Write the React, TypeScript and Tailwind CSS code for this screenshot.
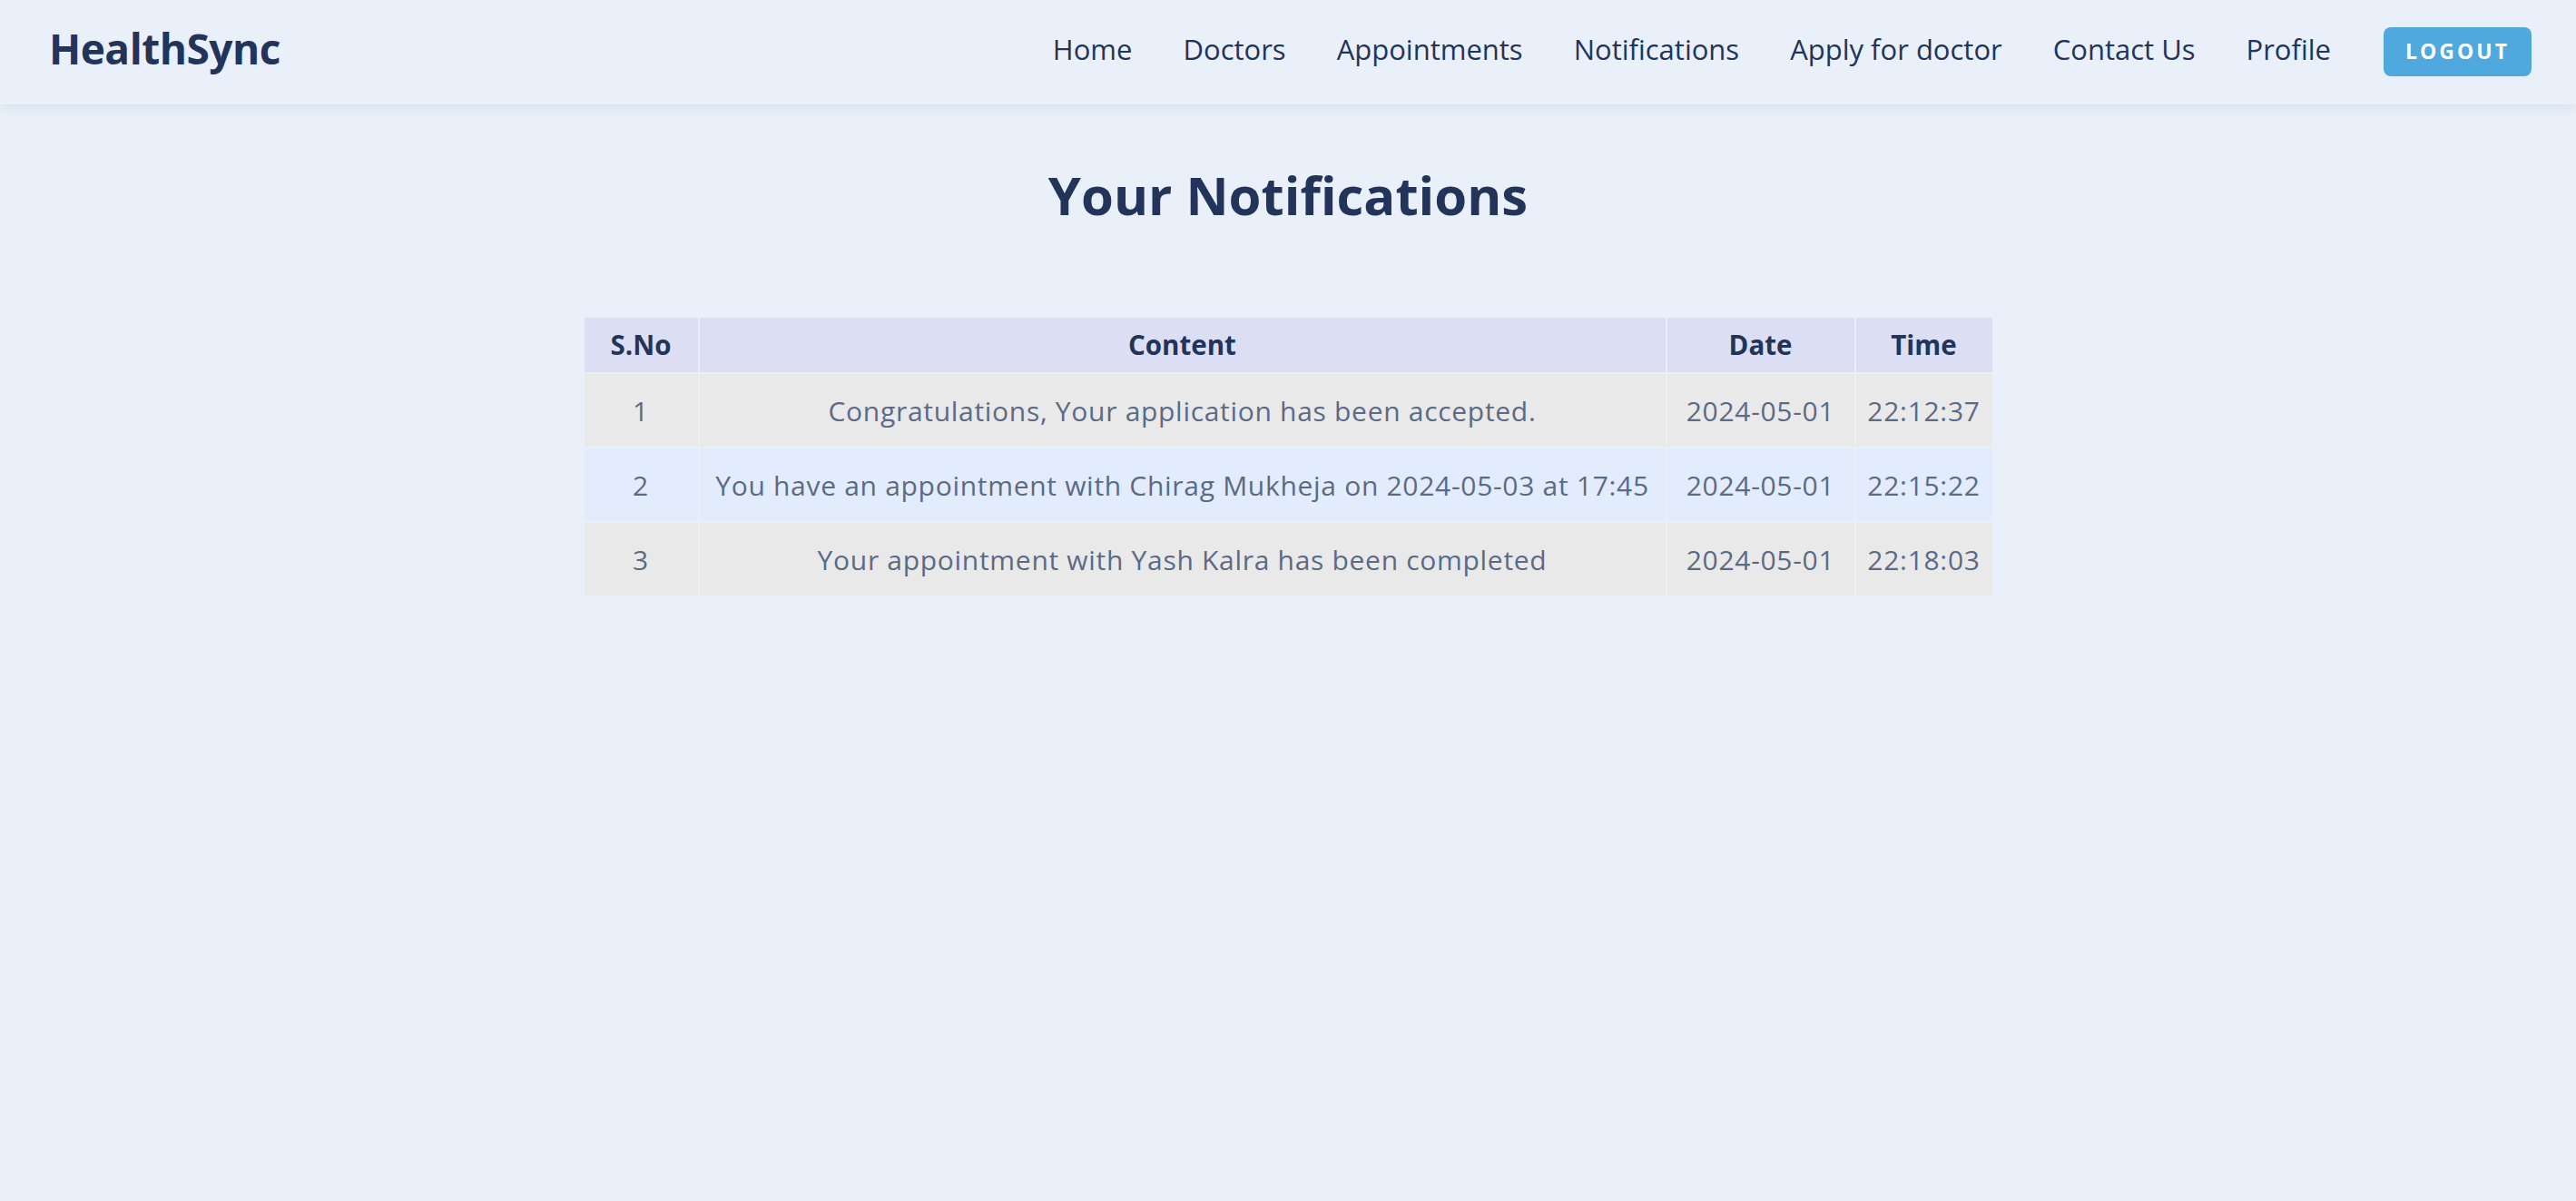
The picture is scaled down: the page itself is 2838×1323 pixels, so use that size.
import React from "react";

const rows = [
  { n: 1, c: "Congratulations, Your application has been accepted.", d: "2024-05-01", t: "22:12:37" },
  { n: 2, c: "You have an appointment with Chirag Mukheja on 2024-05-03 at 17:45", d: "2024-05-01", t: "22:15:22" },
  { n: 3, c: "Your appointment with Yash Kalra has been completed", d: "2024-05-01", t: "22:18:03" },
];

const links = ["Home", "Doctors", "Appointments", "Notifications", "Apply for doctor", "Contact Us", "Profile"];

export default function App() {
  return (
    <div
      className="min-h-screen bg-[#e9f0f9] text-[#22345a]"
      style={{ fontFamily: '"Open Sans", "Noto Sans", sans-serif' }}
    >
      <nav className="h-[115px] flex items-center justify-between pl-[54px] pr-[49px] bg-[#e9f0f9] shadow-[0_4px_12px_rgba(30,50,90,0.08)]">
        <div className="text-[46px] font-bold tracking-[-0.5px] text-[#22345a] -mt-[8px]">HealthSync</div>
        <div className="flex items-center -mt-[6px]">
          <div className="flex items-center gap-[56px] text-[31px] text-[#22345a]">
            {links.map((l) => (
              <a key={l} className="whitespace-nowrap">{l}</a>
            ))}
          </div>
          <button className="ml-[58px] h-[54px] w-[163px] rounded-[8px] bg-[#4fa8de] text-white text-[23px] font-bold tracking-[3px] mt-[4px]">
            LOGOUT
          </button>
        </div>
      </nav>

      <h1 className="text-center text-[58px] font-bold text-[#22345a] mt-[62px] leading-[1.3]">Your Notifications</h1>

      <div className="flex justify-center mt-[96px]">
        <table className="table-fixed border-separate border-spacing-[2px] w-[1555px]">
          <colgroup>
            <col className="w-[125px]" />
            <col className="w-[1064px]" />
            <col className="w-[206px]" />
            <col className="w-[150px]" />
          </colgroup>
          <thead>
            <tr className="bg-[#dcdff3]">
              {["S.No", "Content", "Date", "Time"].map((h) => (
                <th key={h} className="h-[60px] text-[29.5px] font-bold text-[#22345a] text-center">
                  {h}
                </th>
              ))}
            </tr>
          </thead>
          <tbody>
            {rows.map((r) => (
              <tr key={r.n} className={r.n % 2 === 0 ? "bg-[#e2ecfc]" : "bg-[#e9e9ea]"}>
                <td className="h-[80px] text-center text-[30px] tracking-[0.7px] text-[#5b6a85] whitespace-nowrap">{r.n}</td>
                <td className="h-[80px] text-center text-[30px] tracking-[0.7px] text-[#5b6a85] whitespace-nowrap">{r.c}</td>
                <td className="h-[80px] text-center text-[30px] tracking-[0.7px] text-[#5b6a85] whitespace-nowrap">{r.d}</td>
                <td className="h-[80px] text-center text-[30px] tracking-[0.7px] text-[#5b6a85] whitespace-nowrap">{r.t}</td>
              </tr>
            ))}
          </tbody>
        </table>
      </div>
    </div>
  );
}
